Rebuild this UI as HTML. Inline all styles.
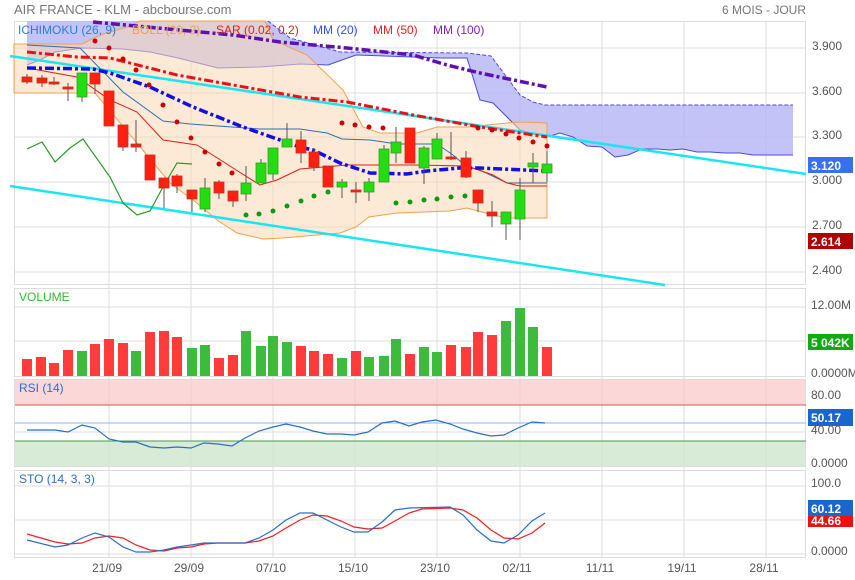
<!DOCTYPE html>
<html><head><meta charset="utf-8"><style>
body{margin:0;background:#fff;width:855px;height:580px;overflow:hidden}
svg{display:block;font-family:"Liberation Sans",sans-serif}
</style></head><body>
<svg width="855" height="580" viewBox="0 0 855 580">
<text x="14" y="14" font-size="13" fill="#777">AIR FRANCE - KLM - abcbourse.com</text>
<text x="806" y="14" font-size="12" fill="#777" text-anchor="end">6 MOIS - JOUR</text>

<!-- grids -->
<g stroke="#ddd" stroke-width="1" fill="none">
<rect x="14.5" y="21.5" width="791" height="263"/>
<rect x="14.5" y="288.5" width="791" height="88"/>
<rect x="14.5" y="379.5" width="791" height="87"/>
<rect x="14.5" y="470.5" width="791" height="87"/>
<path d="M14 48H806M14 93H806M14 137H806M14 182H806M14 227H806M14 272H806"/>
<path d="M14 307H806M14 341H806M14 432H806M14 486H806M14 520H806M14 554H806"/>
<path d="M109 21V557M191 21V557M273 21V557M355 21V557M437 21V557M520 21V557M602 21V557M684 21V557M766 21V557"/>
</g>

<!-- ichimoku cloud -->
<path d="M27 21L268 21L290 38L340 52L467 53L491 56L520 95L533 102L545 105L793 105L793 155L753 155L740 153L725 153L710 152L697 152L683 149L670 150L657 149L642 149L628 155L615 157L602 147L587 146L573 137L560 133L547 137L520 130L493 103L480 100L467 58L440 58L356 55L342 60L328 65L300 64L260 67L218 68L178 58L150 52L123 49L82 48L55 52L40 60L27 65Z" fill="#b8b8f6" fill-opacity="0.85"/>
<path d="M27 65L40 60L55 52L82 48L123 49L150 52L178 58L218 68L260 67L300 64L328 65L342 60L356 55L440 58L467 58L480 100L493 103L520 130L547 137L560 133L573 137L587 146L602 147L615 157L628 155L642 149L657 149L670 150L683 149L697 152L710 152L725 153L740 153L753 155L793 155" fill="none" stroke="#4a4ae0" stroke-width="1"/>
<path d="M268 21L290 38L340 52L467 53L491 56L520 95L533 102L545 105L793 105" fill="none" stroke="#4a4ae0" stroke-width="1" stroke-dasharray="4,2"/>

<!-- bollinger -->
<path d="M14 44L82 44L100 35L127 27L140 21L265 21L273 40L307 55L343 90L363 127L380 133L417 133L437 127L467 127L507 123L520 122L547 123L547 218L507 218L493 215L467 208L450 211L397 213L369 217L356 227L340 233L283 238L263 239L237 233L217 220L197 203L170 183L137 143L95 93L14 93Z" fill="#f9d9b4" fill-opacity="0.55" stroke="#f5a04a" stroke-width="1"/>

<!-- cyan trend lines -->
<path d="M10 56L806 174" stroke="#19e6f0" stroke-width="2.5"/>
<path d="M10 186L665 285" stroke="#19e6f0" stroke-width="2.5"/>

<!-- ichimoku thin lines -->
<polyline points="27,45 80,48 123,92 163,121 190,124 260,129 300,129 327,133 342,139 370,140 397,144 437,144 453,155 467,167 480,170 507,183 547,183" fill="none" stroke="#2e6fb5" stroke-width="1"/>
<polyline points="27,68 77,77 110,100 137,112 163,140 197,145 233,168 260,185 277,180 300,169 347,165 413,165 467,166 493,175 507,183 520,186 547,186" fill="none" stroke="#d8201a" stroke-width="1"/>
<polyline points="27,149 42,142 55,162 70,148 83,139 110,177 123,203 137,215 150,211 163,187 177,163 192,164" fill="none" stroke="#2a9a2a" stroke-width="1.2"/>

<!-- MAs -->
<polyline points="27,52 77,57 110,58 177,75 300,97 347,102 413,115 480,127 547,137" fill="none" stroke="#e8101a" stroke-width="3" stroke-dasharray="9,3,3,3"/>
<polyline points="27,68 93,69 110,73 150,87 193,107 243,127 300,147 313,150 340,163 370,173 407,174 427,171 460,168 480,168 547,171" fill="none" stroke="#1010e0" stroke-width="3.5" stroke-dasharray="9,3,3,3"/>
<polyline points="93,22 233,35 280,42 347,48 413,55 447,65 480,73 547,87" fill="none" stroke="#6010b0" stroke-width="3.5" stroke-dasharray="9,3,3,3"/>

<!-- SAR -->
<g fill="#cc0000">
<circle cx="95" cy="41" r="2.5"/><circle cx="109" cy="48" r="2.5"/><circle cx="123" cy="59" r="2.5"/><circle cx="136" cy="70" r="2.5"/><circle cx="149" cy="85" r="2.5"/><circle cx="163" cy="105" r="2.5"/><circle cx="177" cy="122" r="2.5"/><circle cx="191" cy="138" r="2.5"/><circle cx="205" cy="152" r="2.5"/><circle cx="219" cy="164" r="2.5"/><circle cx="232" cy="173" r="2.5"/>
<circle cx="342" cy="123" r="2.5"/><circle cx="355" cy="125" r="2.5"/><circle cx="369" cy="127" r="2.5"/><circle cx="383" cy="128" r="2.5"/><circle cx="478" cy="128" r="2.5"/><circle cx="492" cy="130" r="2.5"/><circle cx="506" cy="134" r="2.5"/><circle cx="519" cy="138" r="2.5"/><circle cx="533" cy="142" r="2.5"/><circle cx="547" cy="146" r="2.5"/>
</g>
<g fill="#119911">
<circle cx="246" cy="215" r="2.5"/><circle cx="259" cy="214" r="2.5"/><circle cx="273" cy="211" r="2.5"/><circle cx="287" cy="206" r="2.5"/><circle cx="301" cy="201" r="2.5"/><circle cx="314" cy="196" r="2.5"/><circle cx="328" cy="192" r="2.5"/>
<circle cx="396" cy="203" r="2.5"/><circle cx="410" cy="202" r="2.5"/><circle cx="424" cy="200" r="2.5"/><circle cx="437" cy="199" r="2.5"/><circle cx="451" cy="197" r="2.5"/><circle cx="465" cy="196" r="2.5"/>
</g>

<!-- wicks -->
<path stroke="#555" stroke-width="1" d="M27 74V84M42 75V87M54 77V85M68 83V101M82 73V102M95 73V94M109 91V126M123 125V151M136 120V152M150 155V180M164 178V208M177 174V193M192 190V212M205 178V212M219 180V199M233 191V207M246 166V201M261 159V183M273 148V180M287 123V147M301 131V163M314 148V171M328 166V187M342 179V198M356 182V203M369 178V201M384 145V182M396 127V163M410 128V163M424 146V184M437 133V159M451 132V160M466 151V178M478 190V212M492 201V227M506 212V240M520 178V240M533 153V183M547 151V182"/>
<!-- bodies -->
<g fill="#ff2010" stroke="#c03020" stroke-width="0.8">
<rect x="22" y="77" width="10" height="5"/><rect x="37" y="78" width="10" height="5"/><rect x="49" y="82" width="10" height="2"/><rect x="63" y="87" width="10" height="2"/><rect x="90" y="73" width="10" height="11"/><rect x="104" y="91" width="10" height="35"/><rect x="118" y="125" width="10" height="22"/><rect x="131" y="144" width="10" height="3"/><rect x="145" y="155" width="10" height="25"/><rect x="159" y="178" width="10" height="10"/><rect x="172" y="176" width="10" height="10"/><rect x="187" y="190" width="10" height="9"/><rect x="214" y="182" width="10" height="11"/><rect x="228" y="191" width="10" height="10"/><rect x="296" y="140" width="10" height="13"/><rect x="309" y="152" width="10" height="15"/><rect x="323" y="166" width="10" height="21"/><rect x="351" y="190" width="10" height="2"/><rect x="405" y="128" width="10" height="35"/><rect x="446" y="157" width="10" height="2"/><rect x="461" y="158" width="10" height="19"/><rect x="473" y="190" width="10" height="13"/><rect x="487" y="212" width="10" height="4"/>
</g>
<g fill="#22dd11" stroke="#3a9a2a" stroke-width="0.8">
<rect x="77" y="73" width="10" height="24"/><rect x="200" y="188" width="10" height="21"/><rect x="241" y="183" width="10" height="11"/><rect x="256" y="163" width="10" height="20"/><rect x="268" y="148" width="10" height="26"/><rect x="282" y="139" width="10" height="8"/><rect x="337" y="182" width="10" height="5"/><rect x="364" y="182" width="10" height="10"/><rect x="379" y="149" width="10" height="33"/><rect x="391" y="142" width="10" height="11"/><rect x="419" y="148" width="10" height="20"/><rect x="432" y="139" width="10" height="20"/><rect x="501" y="212" width="10" height="12"/><rect x="515" y="190" width="10" height="29"/><rect x="528" y="163" width="10" height="4"/><rect x="542" y="164" width="10" height="9"/>
</g>

<!-- legend -->
<g font-size="12">
<text x="18" y="34" fill="#2a7fd4">ICHIMOKU (26, 9)</text>
<text x="132" y="34" fill="#f5a04a">BOLL (20, 2)</text>
<text x="216" y="34" fill="#e02020">SAR (0.02, 0.2)</text>
<text x="313" y="34" fill="#3050e8">MM (20)</text>
<text x="373" y="34" fill="#e02020">MM (50)</text>
<text x="433" y="34" fill="#8020c0">MM (100)</text>
</g>

<!-- right axis main -->
<g font-size="12" fill="#555">
<text x="812" y="50">3.900</text><text x="812" y="95">3.600</text><text x="812" y="139">3.300</text><text x="812" y="184">3.000</text><text x="812" y="229">2.700</text><text x="812" y="274">2.400</text>
</g>
<rect x="808" y="157" width="45" height="16" fill="#3a70f0"/>
<text x="811" y="170" font-size="12" fill="#fff" font-weight="bold">3.120</text>
<rect x="808" y="233" width="45" height="16" fill="#b00000"/>
<text x="811" y="246" font-size="12" fill="#fff" font-weight="bold">2.614</text>

<!-- volume -->
<text x="19" y="301" font-size="12" fill="#33bb33">VOLUME</text>
<g fill="#ff3b3b">
<rect x="22" y="359" width="10" height="17"/><rect x="36" y="357" width="10" height="19"/><rect x="49" y="363" width="10" height="13"/><rect x="63" y="350" width="10" height="26"/><rect x="90" y="344" width="10" height="32"/><rect x="104" y="339" width="10" height="37"/><rect x="118" y="343" width="10" height="33"/><rect x="145" y="332" width="10" height="44"/><rect x="159" y="331" width="10" height="45"/><rect x="172" y="337" width="10" height="39"/><rect x="214" y="358" width="10" height="18"/><rect x="228" y="355" width="10" height="21"/><rect x="296" y="346" width="10" height="30"/><rect x="309" y="351" width="10" height="25"/><rect x="323" y="354" width="10" height="22"/><rect x="351" y="351" width="10" height="25"/><rect x="405" y="354" width="10" height="22"/><rect x="446" y="345" width="10" height="31"/><rect x="461" y="347" width="10" height="29"/><rect x="473" y="332" width="10" height="44"/><rect x="487" y="335" width="10" height="41"/><rect x="542" y="347" width="10" height="29"/>
</g>
<g fill="#3dbb3d">
<rect x="77" y="351" width="10" height="25"/><rect x="131" y="351" width="10" height="25"/><rect x="187" y="348" width="10" height="28"/><rect x="200" y="345" width="10" height="31"/><rect x="241" y="331" width="10" height="45"/><rect x="256" y="346" width="10" height="30"/><rect x="268" y="336" width="10" height="40"/><rect x="282" y="342" width="10" height="34"/><rect x="337" y="358" width="10" height="18"/><rect x="364" y="357" width="10" height="19"/><rect x="379" y="356" width="10" height="20"/><rect x="391" y="339" width="10" height="37"/><rect x="419" y="347" width="10" height="29"/><rect x="432" y="352" width="10" height="24"/><rect x="501" y="321" width="10" height="55"/><rect x="515" y="308" width="10" height="68"/><rect x="528" y="327" width="10" height="49"/>
</g>
<g font-size="12" fill="#555">
<text x="811" y="309">12.00M</text><text x="811" y="377">0.0000M</text>
</g>
<rect x="808" y="334" width="45" height="16" fill="#11aa11"/>
<text x="811" y="347" font-size="12" fill="#fff" font-weight="bold">5 042K</text>

<!-- RSI -->
<rect x="15" y="380" width="790" height="25" fill="#f9c6c6" fill-opacity="0.7"/>
<path d="M15 405H806" stroke="#e05050" stroke-width="1"/>
<rect x="15" y="441" width="790" height="25" fill="#cde6cd" fill-opacity="0.8"/>
<path d="M15 441H806" stroke="#4a9a4a" stroke-width="1"/>
<path d="M15 423H806" stroke="#8ab8f0" stroke-width="1"/>
<text x="19" y="392" font-size="12" fill="#2a6fc4">RSI (14)</text>
<polyline points="27,430 55,430 68,432 82,425 95,428 109,439 123,442 136,442 150,447 164,448 177,447 191,448 204,443 218,444 232,446 245,438 259,431 273,427 286,424 300,427 313,431 327,434 341,434 354,435 368,432 382,423 395,421 409,426 422,422 436,420 450,424 463,429 477,433 491,436 504,435 518,428 532,422 545,423" fill="none" stroke="#2a6fc4" stroke-width="1.2"/>
<g font-size="12" fill="#555"><text x="811" y="399">80.00</text><text x="811" y="434">40.00</text><text x="811" y="467">0.0000</text></g>
<rect x="808" y="409" width="45" height="17" fill="#1a66cc"/>
<text x="811" y="422" font-size="12" fill="#fff" font-weight="bold">50.17</text>

<!-- STO -->
<text x="19" y="483" font-size="12" fill="#2a6fc4">STO (14, 3, 3)</text>
<polyline points="27,534 55,542 68,544 82,543 95,538 109,536 123,538 136,545 150,550 164,551 177,548 191,547 204,544 218,543 245,543 259,541 273,536 286,528 300,520 313,515 327,516 341,521 354,527 368,529 382,528 395,521 409,513 422,509 450,508 463,510 477,518 491,530 504,538 518,539 532,533 545,523" fill="none" stroke="#ee2020" stroke-width="1.2"/>
<polyline points="27,540 55,547 68,545 82,538 95,533 109,537 123,547 136,552 150,552 164,550 177,547 191,545 204,543 245,543 259,538 273,530 286,520 300,513 313,513 327,520 341,527 354,532 368,532 382,522 395,510 409,508 450,507 463,515 477,530 491,541 504,543 518,535 532,521 545,513" fill="none" stroke="#2a6fc4" stroke-width="1.2"/>
<g font-size="12" fill="#555"><text x="811" y="487">100.0</text><text x="811" y="555">0.0000</text></g>
<rect x="808" y="513" width="45" height="14" fill="#ee1010"/>
<text x="811" y="525" font-size="12" fill="#fff" font-weight="bold">44.66</text>
<rect x="808" y="500" width="45" height="16" fill="#1a66cc"/>
<text x="811" y="513" font-size="12" fill="#fff" font-weight="bold">60.12</text>

<!-- dates -->
<g font-size="12" fill="#555" text-anchor="middle">
<text x="107" y="572">21/09</text><text x="189" y="572">29/09</text><text x="271" y="572">07/10</text><text x="353" y="572">15/10</text><text x="435" y="572">23/10</text><text x="517" y="572">02/11</text><text x="600" y="572">11/11</text><text x="682" y="572">19/11</text><text x="764" y="572">28/11</text>
</g>
</svg>
</body></html>
